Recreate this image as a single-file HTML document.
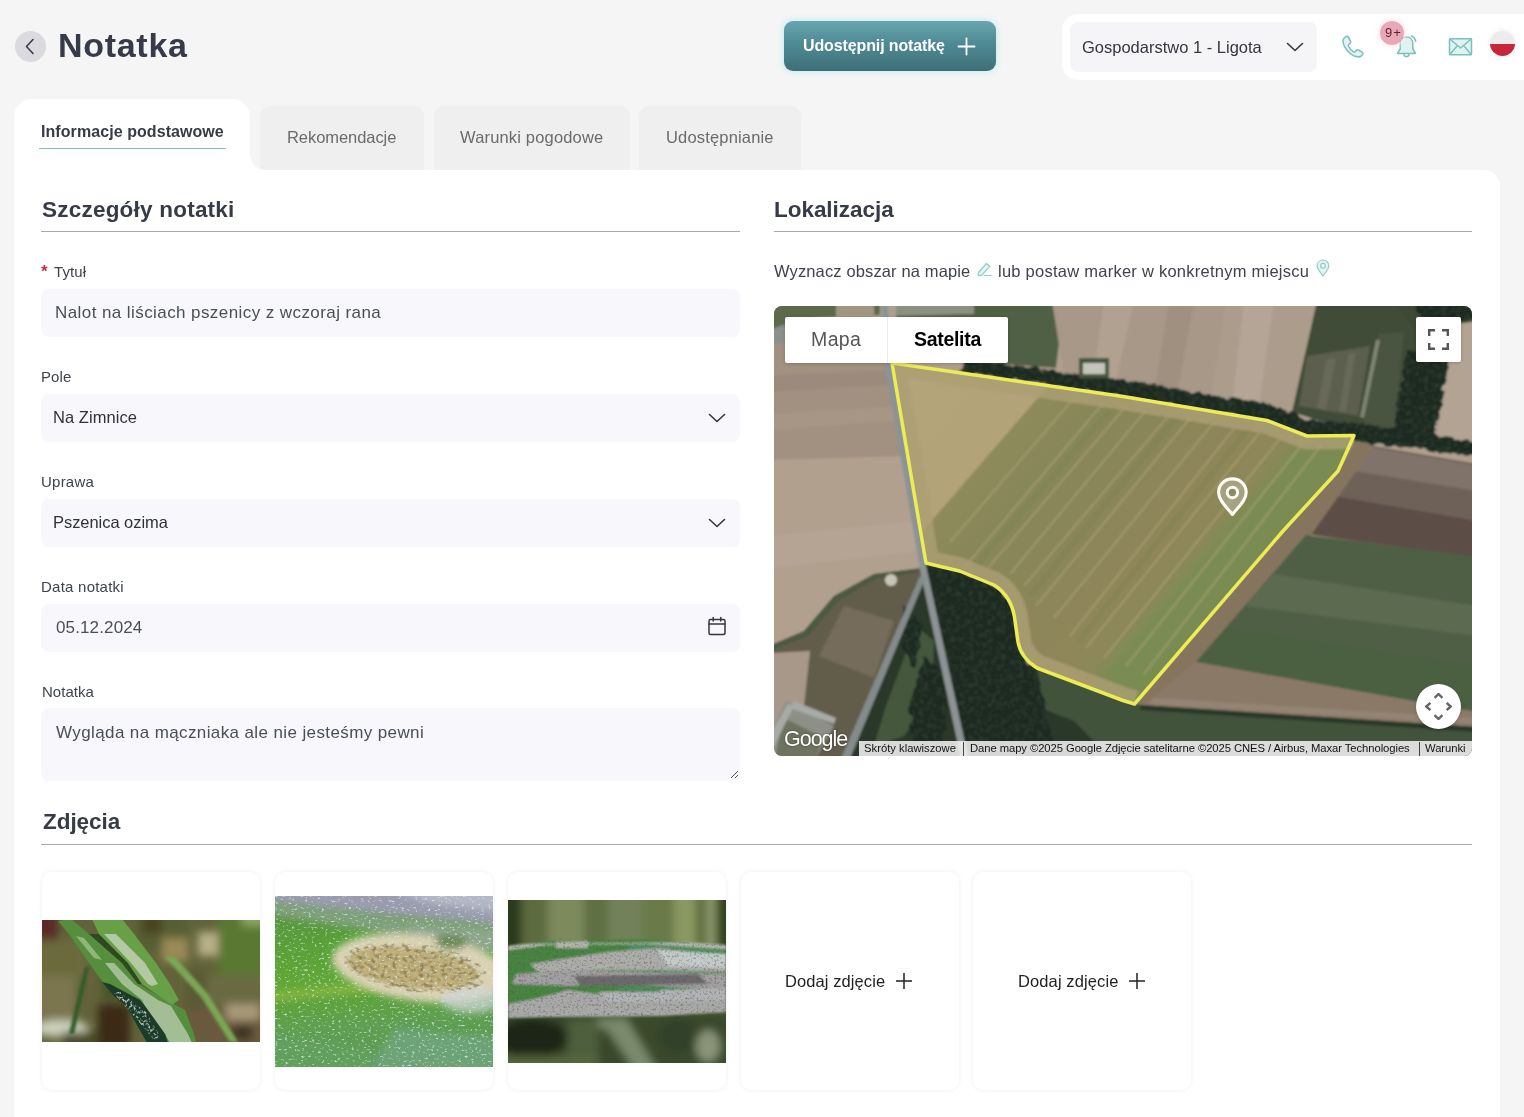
<!DOCTYPE html>
<html lang="pl">
<head>
<meta charset="utf-8">
<title>Notatka</title>
<style>
*{box-sizing:border-box;margin:0;padding:0}
html,body{width:1524px;height:1117px;overflow:hidden}
body{background:#f5f5f5;font-family:"Liberation Sans",sans-serif;color:#3a3f47;position:relative}
.abs{position:absolute}
.t{will-change:transform;position:absolute;white-space:nowrap;line-height:1}
.back{left:15px;top:31px;width:31px;height:31px;border-radius:50%;background:#dbdbdf}
.title{left:59px;top:29px;font-size:34px;font-weight:700;color:#363b47;letter-spacing:-0.2px}
.sharebtn{left:784px;top:21px;width:212px;height:50px;border-radius:9px;background:linear-gradient(180deg,#69a6b0 0%,#4f8a94 45%,#3e6f78 100%);box-shadow:0 0 6px 1px rgba(190,235,240,.9)}
.sharebtn .t{left:19px;top:17px;font-size:16px;font-weight:700;color:#fff}
.toppanel{left:1062px;top:14px;width:480px;height:66px;border-radius:16px;background:#fff}
.farm{left:1070px;top:22px;width:247px;height:50px;border-radius:8px;background:#f5f5f8}
.farm .t{left:12px;top:17px;font-size:16px;color:#33373d}
.tab{position:absolute;top:106px;height:64px;background:#efefef;border-radius:10px 10px 0 0}
.tab .t{top:24px;font-size:16px;color:#6b6b6b}
.tab.active{left:14px;top:99px;width:236px;height:75px;background:#fff;border-radius:18px 18px 0 0}
.tab.active .t{left:27px;top:24px;font-size:15.5px;font-weight:700;color:#363b47}
.tab.active i{position:absolute;left:25px;top:48.500px;width:186.500px;height:1.500px;background:#7cc3bd}
.card{left:14px;top:169.500px;width:1486px;height:960px;background:#fff;border-radius:0 16px 0 0}
.h2{font-size:22px;font-weight:700;color:#363b47}
.hr{position:absolute;height:1px;background:#a9a9a9}
.lbl{font-size:14px;color:#3f444b}
.inp{position:absolute;left:41px;width:699px;height:48px;border-radius:8px;background:#f8f8fc}
.inp .t{left:15px;top:15px;font-size:16.5px;color:#4a4f57}
.inp.sel .t{left:12px;font-size:16px;color:#2f3338}
.photo{position:absolute;top:872px;width:218px;height:218px;border-radius:10px;background:#fff;box-shadow:0 0 5px rgba(0,0,0,.07);overflow:hidden}
.photo .t{font-size:16px;color:#222}
</style>
</head>
<body>
<!-- header -->
<div class="abs back"><svg width="31" height="31" viewBox="0 0 31 31"><path d="M18 8.5 L11.5 15.5 L18 22.5" fill="none" stroke="#3a3f47" stroke-width="1.6" stroke-linecap="round" stroke-linejoin="round"/></svg></div>
<div class="t" style="left:58px;top:28.2px;font-size:34px;letter-spacing:0.7px;font-weight:700;color:#363b47">Notatka</div>
<div class="t" style="left:803.3px;top:38.0px;font-size:16px;letter-spacing:-0.12px;font-weight:700;color:#fff;z-index:2">Udostępnij notatkę</div>
<div class="abs sharebtn">
<svg class="abs" style="left:173px;top:16px" width="19" height="19" viewBox="0 0 19 19"><path d="M9.5 1.5V17.5M1.5 9.5H17.5" stroke="#fff" stroke-width="1.8" stroke-linecap="round"/></svg></div>
<div class="abs toppanel"></div>
<div class="t" style="left:1082.2px;top:38.8px;font-size:16.5px;letter-spacing:0.0px;color:#33373d;z-index:2">Gospodarstwo 1 - Ligota</div>
<div class="abs farm">
<svg class="abs" style="left:215px;top:19px" width="20" height="12" viewBox="0 0 20 12"><path d="M2.5 2.5L10 9.5L17.5 2.5" fill="none" stroke="#33373d" stroke-width="1.6" stroke-linecap="round" stroke-linejoin="round"/></svg></div>
<!-- HEADER-ICONS -->
<svg class="abs" style="left:1338px;top:32px" width="30" height="30" viewBox="0 0 30 30"><path d="M8.200 4.600C6.500 5.400 4.800 7 5 9.500C5.600 16 12.500 23.600 19.500 24.800C22 25.200 24 23.800 24.800 22C25.100 21.200 24.800 20.600 24.100 20.200L20.200 18C19.500 17.600 18.900 17.700 18.400 18.300L17.200 19.700C16.700 20.200 16.100 20.300 15.500 19.900C13.200 18.400 11.500 16.300 10.400 14C10.100 13.300 10.200 12.800 10.800 12.300L12.200 11.200C12.800 10.700 12.900 10.100 12.600 9.400L10.500 5.300C10.100 4.500 9.200 4.200 8.200 4.600Z" fill="#dff3f3" stroke="#7cbfbb" stroke-width="1.500" stroke-linejoin="round"/></svg>
<svg class="abs" style="left:1392px;top:32px" width="30" height="30" viewBox="0 0 30 30"><path d="M14.500 5C10.500 5 8.200 8 8.200 11.500V17L5.500 21.500H23.500L20.800 17V11.500C20.800 8 18.500 5 14.500 5Z" fill="#dff3f3" stroke="#7cbfbb" stroke-width="1.500" stroke-linejoin="round"/><path d="M12 22C12 23.600 13.100 24.600 14.500 24.600C15.900 24.600 17 23.600 17 22" fill="none" stroke="#7cbfbb" stroke-width="1.500"/><path d="M19.500 4C21.800 5 23.300 7 23.800 9.300" fill="none" stroke="#7cbfbb" stroke-width="1.500" stroke-linecap="round"/></svg>
<div class="abs" style="left:1380px;top:21px;width:24px;height:24px;border-radius:50%;background:rgba(232,160,178,.92);box-shadow:0 0 5px 2px rgba(255,235,240,.9)"></div>
<div class="t" style="left:1384.5px;top:26.2px;font-size:13px;letter-spacing:0.9px;color:#5b1f33">9+</div>
<svg class="abs" style="left:1446px;top:34px" width="30" height="26" viewBox="0 0 30 26"><rect x="3.500" y="4.800" width="22" height="16" rx=".8" fill="#dff3f3" stroke="#7cbfbb" stroke-width="1.500"/><path d="M3.500 4.800L14.500 14L25.500 4.800M3.500 20.800L11.500 11.500M25.500 20.800L17.500 11.500" fill="none" stroke="#7cbfbb" stroke-width="1.400" stroke-linejoin="round"/></svg>
<div class="abs" style="left:1490px;top:31px;width:25px;height:25px;border-radius:50%;overflow:hidden;background:#ececec;box-shadow:0 0 4px 1px rgba(240,240,240,.9)"><div class="abs" style="left:0;top:12.500px;width:25px;height:13px;background:#c7273d"></div></div>

<!-- tabs -->
<div class="tab active"><i></i></div>
<div class="t" style="left:40.5px;top:123.8px;font-size:16px;letter-spacing:0.07px;font-weight:700;color:#363b47;z-index:2">Informacje podstawowe</div>
<div class="tab" style="left:260px;width:164px"></div>
<div class="t" style="left:286.7px;top:129.3px;font-size:16.5px;letter-spacing:-0.06px;color:#6b6b6b;z-index:2">Rekomendacje</div>
<div class="tab" style="left:434px;width:196px"></div>
<div class="t" style="left:459.9px;top:129.3px;font-size:16.5px;letter-spacing:0.17px;color:#6b6b6b;z-index:2">Warunki pogodowe</div>
<div class="tab" style="left:639px;width:161.500px"></div>
<div class="t" style="left:665.7px;top:129.3px;font-size:16.5px;letter-spacing:0.17px;color:#6b6b6b;z-index:2">Udostępnianie</div>

<div class="abs card"></div>
<div class="abs" style="left:250px;top:155px;width:15px;height:15px;background:radial-gradient(circle at 100% 0,rgba(255,255,255,0) 14.500px,#fff 15px)"></div>

<!-- left column -->
<div class="t" style="left:42.3px;top:199.0px;font-size:22.5px;letter-spacing:0.22px;font-weight:700;color:#363b47">Szczegóły notatki</div>
<div class="hr" style="left:41px;top:231px;width:699px"></div>
<div class="t" style="left:41px;top:262.500px;font-size:17px;font-weight:700;color:#b8324c">*</div>
<div class="t" style="left:53.6px;top:263.9px;font-size:15px;letter-spacing:0.11px;color:#3f444b">Tytuł</div>
<div class="inp" style="top:289px"></div>
<div class="t" style="left:55.2px;top:304.1px;font-size:17px;letter-spacing:0.42px;color:#4a4f57">Nalot na liściach pszenicy z wczoraj rana</div>
<div class="t" style="left:40.8px;top:368.8px;font-size:15px;letter-spacing:0.07px;color:#3f444b">Pole</div>
<div class="t" style="left:52.6px;top:409.0px;font-size:16.5px;letter-spacing:0.05px;color:#2f3338;z-index:2">Na Zimnice</div>
<div class="inp sel" style="top:394px"><svg class="abs" style="left:666px;top:18px" width="20" height="12" viewBox="0 0 20 12"><path d="M2.500 2.500L10 9.500L17.500 2.500" fill="none" stroke="#33373d" stroke-width="1.600" stroke-linecap="round" stroke-linejoin="round"/></svg></div>
<div class="t" style="left:40.8px;top:473.8px;font-size:15px;letter-spacing:0.23px;color:#3f444b">Uprawa</div>
<div class="t" style="left:52.6px;top:514.0px;font-size:16.5px;letter-spacing:-0.05px;color:#2f3338;z-index:2">Pszenica ozima</div>
<div class="inp sel" style="top:499px"><svg class="abs" style="left:666px;top:18px" width="20" height="12" viewBox="0 0 20 12"><path d="M2.500 2.500L10 9.500L17.500 2.500" fill="none" stroke="#33373d" stroke-width="1.600" stroke-linecap="round" stroke-linejoin="round"/></svg></div>
<div class="t" style="left:40.8px;top:578.8px;font-size:15px;letter-spacing:0.24px;color:#3f444b">Data notatki</div>
<div class="t" style="left:55.7px;top:618.6px;font-size:17px;letter-spacing:0.13px;color:#4a4f57;z-index:2">05.12.2024</div>
<div class="inp" style="top:604px"><svg class="abs" style="left:665px;top:11px" width="22" height="22" viewBox="0 0 22 22"><rect x="3" y="4.500" width="16" height="15" rx="1.500" fill="none" stroke="#33373d" stroke-width="1.500"/><path d="M3 9H19M7.200 2.500V6M14.800 2.500V6" stroke="#33373d" stroke-width="1.500" stroke-linecap="round"/></svg></div>
<div class="t" style="left:41.5px;top:683.8px;font-size:15px;letter-spacing:0.02px;color:#3f444b">Notatka</div>
<div class="t" style="left:56.2px;top:723.6px;font-size:17px;letter-spacing:0.39px;color:#4a4f57;z-index:2">Wygląda na mączniaka ale nie jesteśmy pewni</div>
<div class="inp" style="top:708px;height:73px"><svg class="abs" style="left:688px;top:61px" width="10" height="10" viewBox="0 0 10 10"><path d="M9 2L2 9M9 6L6 9" stroke="#555" stroke-width="1"/></svg></div>

<!-- right column -->
<div class="t" style="left:773.8px;top:198.8px;font-size:22.5px;letter-spacing:-0.04px;font-weight:700;color:#363b47">Lokalizacja</div>
<div class="hr" style="left:774px;top:231px;width:698px"></div>
<div class="t" style="left:774.2px;top:262.6px;font-size:16.5px;letter-spacing:0.13px;color:#3f444b">Wyznacz obszar na mapie</div>
<div class="t" style="left:998.2px;top:262.6px;font-size:16.5px;letter-spacing:0.25px;color:#3f444b">lub postaw marker w konkretnym miejscu</div>
<svg class="abs" style="left:975px;top:260px" width="18" height="18" viewBox="0 0 18 18"><path d="M3.500 12.500L11.500 3.500L14.800 6.300L6.800 15.200L3 15.600Z" fill="#e4f4f4" stroke="#93cbc7" stroke-width="1.200" stroke-linejoin="round"/><path d="M9 15.500H16" stroke="#93cbc7" stroke-width="1.200" stroke-linecap="round"/></svg>
<svg class="abs" style="left:1314px;top:258px" width="18" height="20" viewBox="0 0 18 20"><path d="M9 2C5.600 2 3.200 4.500 3.200 7.700C3.200 11.500 7 15 9 18C11 15 14.800 11.500 14.800 7.700C14.800 4.500 12.400 2 9 2Z" fill="#e4f4f4" stroke="#93cbc7" stroke-width="1.200" stroke-linejoin="round"/><circle cx="9" cy="7.800" r="2.400" fill="#fff" stroke="#93cbc7" stroke-width="1.200"/></svg>
<!-- MAP -->
<div class="abs" id="map" style="left:774px;top:306px;width:698px;height:450px;border-radius:8px;overflow:hidden;background:#b09f8e">
<svg class="abs" style="left:0;top:0" width="698" height="450" viewBox="0 0 698 450">
<defs>
<filter id="soft" x="-5%" y="-5%" width="110%" height="110%"><feGaussianBlur stdDeviation="1.1"/></filter>
<filter id="rough" x="-5%" y="-5%" width="110%" height="110%" color-interpolation-filters="sRGB"><feTurbulence type="fractalNoise" baseFrequency="0.11" numOctaves="2" seed="5" result="t"/><feDisplacementMap in="SourceGraphic" in2="t" scale="8" xChannelSelector="R" yChannelSelector="G" result="d"/><feGaussianBlur in="d" stdDeviation="0.7"/></filter>
<filter id="mottle" x="-5%" y="-5%" width="110%" height="110%" color-interpolation-filters="sRGB"><feTurbulence type="fractalNoise" baseFrequency="0.11" numOctaves="2" seed="5" result="t"/><feDisplacementMap in="SourceGraphic" in2="t" scale="8" xChannelSelector="R" yChannelSelector="G" result="d"/><feTurbulence type="fractalNoise" baseFrequency="0.22" numOctaves="3" seed="11" result="n"/><feColorMatrix in="n" type="matrix" values="0 0 0 0 0.2  0 0 0 0 0.28  0 0 0 0 0.2  0 3 0 0 -1.450" result="c"/><feComposite in="c" in2="d" operator="in" result="m"/><feGaussianBlur in="m" stdDeviation="0.600"/></filter>
<filter id="soft2" x="-5%" y="-5%" width="110%" height="110%"><feGaussianBlur stdDeviation="2.5"/></filter>
<filter id="grain" x="0" y="0" width="100%" height="100%"><feTurbulence type="fractalNoise" baseFrequency="0.35" numOctaves="2" seed="4" result="n"/><feColorMatrix in="n" type="matrix" values="0 0 0 0 0  0 0 0 0 0  0 0 0 0 0  0.9 0.9 0 0 -0.75"/></filter>
<linearGradient id="fieldg" gradientUnits="userSpaceOnUse" x1="0" y1="0" x2="454" y2="392">
<stop offset="0" stop-color="#b6a67d"/><stop offset="0.43" stop-color="#b2a379"/><stop offset="0.436" stop-color="#8e8a5b"/><stop offset="0.52" stop-color="#88875a"/><stop offset="0.62" stop-color="#8a865a"/><stop offset="0.74" stop-color="#8f865a"/><stop offset="0.795" stop-color="#8c8858"/><stop offset="0.825" stop-color="#7b8c53"/><stop offset="1" stop-color="#778b51"/>
</linearGradient>
<clipPath id="polyclip"><path d="M118 57L349 90.5L493 114.5L533 130L580 129.5L564 165L509 225L360.5 398L349 394.5L263 362Q247 352 244 336L240.5 311Q237 290 220 279L185.5 265L160 259L152 257L146.5 225Z"/></clipPath>
</defs>
<g filter="url(#soft)">
<!-- base fields -->
<rect x="-5" y="-5" width="708" height="460" fill="#b09f8e"/>
<!-- left tan field texture bands -->
<path d="M-5 60L115 60L140 215L148 262L100 268L60 290L30 325L-5 340Z" fill="#b2a08f"/>
<path d="M-5 36L112 30L118 57L133 150L-5 154Z" fill="#a29180"/>
<path d="M-5 70L122 64L124 78L-5 86Z" fill="#97877a" opacity=".6"/>
<path d="M-5 108L128 100L130 114L-5 124Z" fill="#ab9a89" opacity=".6"/>
<path d="M-5 230L142 215L146 245L-5 262Z" fill="#b8a797" opacity=".6"/>
<!-- top strip above control -->
<path d="M-5 -5L106 -5L106 9L40 12L-5 30Z" fill="#5b6a4c"/>
<path d="M62 -5L100 -5L100 12L62 12Z" fill="#a39584"/>
<path d="M-5 24L12 18L12 36L-5 40Z" fill="#8b918a"/>
<!-- top fields right of road -->
<path d="M122 -5L290 -5L282 62L122 50Z" fill="#4f6044"/>
<path d="M122 -5L200 -5L200 8L122 10Z" fill="#8b917f"/>
<path d="M278 -5L455 -5L437 100L349 84L290 70Z" fill="#a89888"/>
<path d="M330 -5L360 -5L340 84L318 80Z" fill="#b4a595" opacity=".7"/>
<path d="M395 -5L420 -5L402 94L380 90Z" fill="#9d8d7d" opacity=".7"/>
<path d="M452 -5L545 -5L520 108L436 98Z" fill="#ab9c8c"/>
<path d="M470 -5L500 -5L485 100L458 98Z" fill="#b8aa9b" opacity=".7"/>
<!-- green/brown field top right -->
<path d="M543 -5L664 -5L650 60L634 132L580 126L518 106Z" fill="#404c39"/>
<path d="M533 50L596 40L584 110L525 100Z" fill="#5c5e4d"/>
<path d="M552 54L562 52L552 104L543 102Z" fill="#6e6d5c" opacity=".7"/>
<path d="M574 48L582 46L572 106L565 105Z" fill="#6e6d5c" opacity=".7"/>
<path d="M604 28L630 26L620 124L590 116Z" fill="#48543f"/>
<path d="M602 34L606 34L590 112L586 111Z" fill="#9a9d8c" opacity=".7"/>
<path d="M620 -5L703 -5L703 20L640 22Z" fill="#3c4a36"/>
<!-- tree cluster right -->
<path d="M668 20L703 15L703 142L660 134Z" fill="#b2a392"/>
<!-- brown fields right -->
<path d="M588 138L703 158L703 255L532 228L560 180Z" fill="#6e6259"/>
<path d="M560 190L703 215L703 252L536 228Z" fill="#5c4e46"/>
<path d="M590 140L703 160L703 185L580 165Z" fill="#80736a"/>
<!-- path band right of polygon -->
<path d="M582 132L600 140L535 232L424 358L366 402L358 398L509 225L564 165Z" fill="#85745f"/>
<!-- green field bottom right -->
<path d="M532 229L703 251L703 406L644 396L422 356Z" fill="#4f5f44"/>
<path d="M500 268L703 300L703 330L470 300Z" fill="#5e6d52" opacity=".8"/>
<path d="M452 322L703 360L703 406L644 396L422 356Z" fill="#4b6041" opacity=".8"/>
<!-- tan strip bottom -->
<path d="M422 356L644 396L703 406L703 422L366 400Z" fill="#8a7966"/>
<path d="M380 392L703 412L703 418L375 398Z" fill="#99897a" opacity=".7"/>
<!-- bottom dark strip & meadow -->
<path d="M255 355L366 399L703 421L703 455L280 455Z" fill="#42533b"/>
<path d="M262 400L300 415L340 455L270 455Z" fill="#2b3829"/>
<path d="M366 399L703 421L703 426L366 404Z" fill="#2c3929"/>
<!-- olive fields bottom-left -->
<path d="M-5 340L30 325L60 290L100 268L148 262L148 272L70 455L-5 455Z" fill="#625d4b"/>
<path d="M-5 340L30 325L60 290L100 268L148 262L148 266L102 273L64 295L34 330L-5 346Z" fill="#4b5a40"/>
<path d="M70 300L120 315L100 372L45 350Z" fill="#7b705f" opacity=".8"/>
<path d="M-5 347L36 345L30 400L10 430L-5 440Z" fill="#a8988a"/>
<path d="M12 395L60 420L40 455L-5 455L-5 430Z" fill="#8e9088"/>
<path d="M10 412L50 432L40 455L0 455Z" fill="#6d735f"/>
<!-- between roads -->
<path d="M150 268L190 455L72 455Z" fill="#2b382a"/>
<path d="M142 320L160 335L158 390L130 430L100 440L112 400Z" fill="#4a5e40" opacity=".85"/>
<!-- forest -->
<g filter="url(#rough)" fill="#1f2b23">
<path d="M152 257L185 265L220 279Q237 290 240.5 311L244 336Q247 352 263 362L282 455L192 455L150 262Z"/>
<path d="M130 300L150 320L140 360L125 340Z"/>
<path d="M150 350L175 370L170 440L140 455L135 400Z"/>
<path d="M190 52L349 74L493 98L533 113L580 117L703 136L703 151L580 135L533 133L493 115L349 91L186 66Z"/>
<path d="M634 44L676 52L658 140L618 128Z"/>
<path d="M640 -5L703 -5L703 12L650 18Z"/>
</g>
<g filter="url(#mottle)" fill="#000" opacity=".75">
<path d="M152 257L185 265L220 279Q237 290 240.5 311L244 336Q247 352 263 362L282 455L192 455L150 262Z"/>
<path d="M130 300L150 320L140 360L125 340Z"/>
<path d="M150 350L175 370L170 440L140 455L135 400Z"/>
<path d="M190 52L349 74L493 98L533 113L580 117L703 136L703 151L580 135L533 133L493 115L349 91L186 66Z"/>
<path d="M634 44L676 52L658 140L618 128Z"/>
<path d="M640 -5L703 -5L703 12L650 18Z"/>
</g>
<!-- roads -->
<path d="M107 -5L113.500 -5L117 57L146 225L152.500 262L195 455L187.500 455L146 264L139.500 226L110.500 58Z" fill="#8d9395"/>
<path d="M146 270L151.500 272L75 455L66 455Z" fill="#848b8c"/>
<path d="M20 395L62 412L60 418L16 402Z" fill="#a7aaa6"/>
<path d="M14 398L20 400L-5 450L-5 430Z" fill="#a7aaa6"/>
<circle cx="117" cy="274" r="6" fill="#c9c4b8"/>
<rect x="305" y="52" width="30" height="20" fill="#4a5540"/><rect x="309" y="57" width="22" height="11" fill="#c4c4bb"/>
</g>
<!-- field polygon -->
<g clip-path="url(#polyclip)">
<rect x="100" y="40" width="500" height="370" fill="url(#fieldg)"/>
<g stroke="#b0a47c" stroke-width="2.400" opacity=".5" fill="none" filter="url(#soft)">
<path d="M300 92L176 236M330 96L190 262M352 100L214 262M372 104L236 268M396 108L250 280M416 112L262 300M440 116L280 312M462 120L296 330M486 126L312 342M508 130L330 352M530 136L352 360M548 138L370 368"/>
</g>
<g stroke="#7b8050" stroke-width="6" opacity=".3" fill="none"><path d="M341 98L200 262M404 110L256 290M474 123L304 336"/></g>
<path d="M580 129.500L533 130L493 114.500L349 90.500L118 57L146.500 225L152 257L160 259L185.500 265L220 279Q237 290 240.5 311L244 336Q247 352 263 362L349 394.500L360.500 398" fill="none" stroke="#ad9f75" stroke-width="27" stroke-linejoin="round" opacity=".8" filter="url(#soft)"/>
</g>
<path d="M118 57L349 90.5L493 114.5L533 130L580 129.5L564 165L509 225L360.5 398L349 394.5L263 362Q247 352 244 336L240.5 311Q237 290 220 279L185.5 265L160 259L152 257L146.5 225Z" fill="none" stroke="#ecec54" stroke-width="3.500" stroke-linejoin="round"/>
<!-- marker pin -->
<g transform="translate(458.400,171.200)">
<path d="M0 1.700C-8 1.700 -13.800 7.700 -13.800 15.200C-13.800 24 -4 31.500 0 37.300C4 31.500 13.800 24 13.800 15.200C13.800 7.700 8 1.700 0 1.700Z" fill="rgba(205,205,200,.38)" stroke="#fffdf2" stroke-width="3.100" stroke-linejoin="round"/>
<circle cx="0" cy="15.300" r="6.600" fill="rgba(120,118,80,.55)"/>
<circle cx="0" cy="15.300" r="5.200" fill="none" stroke="#fffdf2" stroke-width="3"/>
</g>
</svg>
<!-- map type control -->
<div class="abs" style="left:11px;top:11px;width:223px;height:45.500px;background:#fff;border-radius:2px;box-shadow:0 1px 4px -1px rgba(0,0,0,.3)">
<div class="abs" style="left:101.500px;top:0;width:1px;height:45.500px;background:#ececec"></div>
<div class="t" style="left:26px;top:13.0px;font-size:19.5px;letter-spacing:0.39px;color:#565656">Mapa</div>
<div class="t" style="left:129.2px;top:13.0px;font-size:19.5px;letter-spacing:-0.3px;font-weight:700;color:#000">Satelita</div>
</div>
<!-- fullscreen -->
<div class="abs" style="left:642px;top:11px;width:45px;height:45px;background:#fff;border-radius:2px;box-shadow:0 1px 4px -1px rgba(0,0,0,.3)">
<svg class="abs" style="left:12px;top:12px" width="21" height="21" viewBox="0 0 21 21"><path d="M1.2 7V1.2H7M14 1.2H19.800V7M19.800 14V19.800H14M7 19.800H1.200V14" fill="none" stroke="#555" stroke-width="2.400"/></svg>
</div>
<!-- pan control -->
<div class="abs" style="left:642px;top:378px;width:45px;height:45px;background:#fff;border-radius:50%;box-shadow:0 1px 4px -1px rgba(0,0,0,.3)">
<svg class="abs" style="left:9px;top:9px" width="27" height="27" viewBox="0 0 27 27"><path d="M9.600 4.900L13.500 1L17.400 4.900M9.600 22.100L13.500 26L17.400 22.100M5.400 9.800L1.300 13.500L5.400 17.200M21.600 9.800L25.700 13.500L21.600 17.200" fill="none" stroke="#666" stroke-width="2.400"/></svg>
</div>
<!-- google logo -->
<div class="t" style="left:10.4px;top:422.8px;font-size:21.5px;letter-spacing:-1.01px;color:#fff;text-shadow:0 0 2px rgba(0,0,0,.55)">Google</div>
<!-- attribution -->
<div class="abs" style="left:84.500px;top:434.500px;width:614px;height:16px;background:rgba(245,245,245,.86)"></div>
<div class="t" style="left:89.8px;top:437.1px;font-size:11.25px;letter-spacing:-0.0px;color:#111">Skróty klawiszowe</div>
<div class="abs" style="left:188.500px;top:436px;width:1px;height:14px;background:#444"></div>
<div class="t" style="left:195.8px;top:437.1px;font-size:11.25px;letter-spacing:-0.07px;color:#111">Dane mapy ©2025 Google Zdjęcie satelitarne ©2025 CNES / Airbus, Maxar Technologies</div>
<div class="abs" style="left:644.500px;top:436px;width:1px;height:14px;background:#444"></div>
<div class="t" style="left:651.3px;top:437.1px;font-size:11.25px;letter-spacing:-0.06px;color:#111">Warunki</div>
</div>

<!-- photos -->
<div class="t" style="left:42.5px;top:811.0px;font-size:22.5px;letter-spacing:-0.05px;font-weight:700;color:#363b47">Zdjęcia</div>
<div class="hr" style="left:41px;top:844px;width:1431px"></div>
<div class="photo" style="left:42px"><svg class="abs" style="left:0;top:48px" width="218" height="122" viewBox="0 0 218 122">
<defs><filter id="b1" x="-10%" y="-10%" width="120%" height="120%"><feGaussianBlur stdDeviation="4.500"/></filter><filter id="b1s" x="-10%" y="-10%" width="120%" height="120%"><feGaussianBlur stdDeviation="0.700"/></filter><filter id="b1m" x="-10%" y="-10%" width="120%" height="120%"><feGaussianBlur stdDeviation="1.800"/></filter>
<filter id="sp1" x="0" y="0" width="100%" height="100%" color-interpolation-filters="sRGB"><feTurbulence type="fractalNoise" baseFrequency="0.35" numOctaves="2" seed="2" result="n"/><feColorMatrix in="n" type="matrix" values="0 0 0 0 0.86  0 0 0 0 0.9  0 0 0 0 0.86  0 4 0 0 -1.900" result="c"/><feComposite in="c" in2="SourceAlpha" operator="in"/></filter></defs>
<rect width="218" height="122" fill="#62633a"/>
<g filter="url(#b1)">
<rect x="-10" y="-10" width="26" height="30" fill="#5a2a28"/>
<rect x="-5" y="20" width="50" height="40" fill="#6b6a3c"/>
<rect x="-10" y="56" width="44" height="40" fill="#7c7650"/>
<ellipse cx="18" cy="108" rx="28" ry="9" fill="#cdd0bc"/>
<rect x="20" y="112" width="50" height="14" fill="#4a4a28"/>
<rect x="95" y="-10" width="50" height="40" fill="#565f30"/>
<rect x="120" y="18" width="26" height="24" fill="#9a8a58"/>
<rect x="100" y="-6" width="20" height="20" fill="#4a4424"/>
<rect x="156" y="12" width="24" height="24" fill="#b8b088"/>
<rect x="176" y="-10" width="50" height="70" fill="#5a7832"/>
<rect x="200" y="-8" width="24" height="14" fill="#8aa860"/>
<rect x="160" y="56" width="64" height="32" fill="#6a6a42"/>
<rect x="140" y="86" width="84" height="40" fill="#6a5a3c"/>
<rect x="184" y="84" width="34" height="16" fill="#a89a78"/>
<rect x="190" y="106" width="20" height="14" fill="#3a3020"/>
<rect x="56" y="84" width="32" height="44" fill="#3a2c18"/>
<rect x="60" y="50" width="30" height="30" fill="#4a5226"/>
<rect x="145" y="50" width="20" height="40" fill="#5a5a36"/>
</g>
<g filter="url(#b1m)">
<path d="M122 36L134 38L166 74L196 122L188 122L160 78Z" fill="#7aa855"/>
<path d="M43 47L47 47L32 114L27 114Z" fill="#2f5a25"/>
</g>
<g filter="url(#b1s)">
<path d="M16 1L29 -1L47 14L80 43L96 64L124 80L143 90L152 114L154 123L105 123L100 114L84 86L62 64L47 43L27 14Z" fill="#548f3e"/>
<path d="M47 14L57 14L86 43L100 64L96 64L80 43Z" fill="#2f4a24"/>
<path d="M63 43L72 43L92 64L116 80L129 86L146 114L150 123L128 123L123 114L103 86L100 80L80 64Z" fill="#c5d0bb" opacity=".7"/>
<path d="M34 16L42 18L60 40L52 38Z" fill="#a9c49a" opacity=".7"/>
<path d="M60 62L68 64L98 80L103 86L123 114L126 123L105 123L100 114L84 86L72 76Z" fill="#1f3a2a"/>
<path d="M50 -1L80 -1L92 14L114 43L128 64L137 80L130 85L100 64L86 43L57 14Z" fill="#68a046"/>
<path d="M62 14L74 14L103 43L116 64L110 66L106 64L89 43Z" fill="#cfd8c8" opacity=".72"/>
</g>
<path d="M70 72L78 72L104 92L118 116L112 120L92 96Z" filter="url(#sp1)" opacity=".8"/>
</svg></div>
<div class="photo" style="left:275px"><svg class="abs" style="left:0;top:24px" width="218" height="171" viewBox="0 0 218 171">
<defs><filter id="b2" x="-10%" y="-10%" width="120%" height="120%"><feGaussianBlur stdDeviation="3.500"/></filter><filter id="b2s" x="-10%" y="-10%" width="120%" height="120%"><feGaussianBlur stdDeviation="1.500"/></filter>
<filter id="sp2" x="0" y="0" width="100%" height="100%" color-interpolation-filters="sRGB"><feTurbulence type="fractalNoise" baseFrequency="0.3 0.45" numOctaves="2" seed="7" result="n"/><feColorMatrix in="n" type="matrix" values="0 0 0 0 0.84  0 0 0 0 0.92  0 0 0 0 0.9  0 0 5 0 -3"/></filter>
<filter id="sp2b" x="0" y="0" width="100%" height="100%" color-interpolation-filters="sRGB"><feTurbulence type="fractalNoise" baseFrequency="0.18 0.3" numOctaves="3" seed="21" result="n"/><feColorMatrix in="n" type="matrix" values="0 0 0 0 0.5  0 0 0 0 0.44  0 0 0 0 0.27  0 4 0 0 -1.950" result="c"/><feComposite in="c" in2="SourceAlpha" operator="in"/></filter>
<linearGradient id="g2" x1="0" y1="0" x2="0.12" y2="1"><stop offset="0" stop-color="#5a8f48"/><stop offset="0.3" stop-color="#58a038"/><stop offset="0.52" stop-color="#62a838"/><stop offset="0.58" stop-color="#7cb23e"/><stop offset="0.64" stop-color="#5ea23c"/><stop offset="0.8" stop-color="#5f9f52"/><stop offset="1" stop-color="#5c9a50"/></linearGradient></defs>
<rect width="218" height="171" fill="url(#g2)"/>
<g filter="url(#b2)">
<path d="M-10 -10L230 -10L230 30L107 18L-10 5Z" fill="#9a9cae"/>
<path d="M100 -10L230 -10L230 16L160 8Z" fill="#b4b7c6"/>
<path d="M-10 6L107 20L230 32L230 50L130 40L-10 18Z" fill="#7fa17c"/>
<path d="M130 30L230 34L230 56L150 50Z" fill="#8fa58c"/>
<path d="M120 132L230 142L230 180L90 180Z" fill="#74a585" opacity=".7"/>
<path d="M-10 140L100 150L100 180L-10 180Z" fill="#62a060" opacity=".8"/>
<ellipse cx="145" cy="72" rx="88" ry="33" fill="#d9d2b2" transform="rotate(7 145 72)"/>
<ellipse cx="196" cy="104" rx="30" ry="13" fill="#cdd4d6" opacity=".75"/>
<ellipse cx="176" cy="46" rx="16" ry="8" fill="#6f8a58"/>
</g>
<g filter="url(#b2s)">
<ellipse cx="138" cy="72" rx="66" ry="20" fill="#bfb07c" transform="rotate(7 138 72)"/>
</g>
<ellipse cx="140" cy="72" rx="72" ry="24" transform="rotate(7 140 72)" filter="url(#sp2b)" opacity=".75"/>
<rect width="218" height="171" filter="url(#sp2)" opacity=".8"/>
</svg></div>
<div class="photo" style="left:508px"><svg class="abs" style="left:0;top:28px" width="218" height="163" viewBox="0 0 218 163">
<defs><filter id="b3" x="-10%" y="-10%" width="120%" height="120%"><feGaussianBlur stdDeviation="4.500"/></filter><filter id="b3s" x="-10%" y="-10%" width="120%" height="120%"><feGaussianBlur stdDeviation="1.300"/></filter>
<filter id="sp3" x="0" y="0" width="100%" height="100%" color-interpolation-filters="sRGB"><feTurbulence type="fractalNoise" baseFrequency="0.45" numOctaves="2" seed="3" result="n"/><feColorMatrix in="n" type="matrix" values="0 0 0 0 0.32  0 0 0 0 0.3  0 0 0 0 0.34  0 3 0 0 -1.500"/></filter>
<clipPath id="leaf3"><path d="M0 46L40 41L135 39L218 45L218 112L150 116L40 117L0 118Z"/></clipPath></defs>
<rect width="218" height="163" fill="#56653c"/>
<g filter="url(#b3)">
<rect x="-10" y="-10" width="26" height="60" fill="#2c3a1c"/>
<rect x="14" y="-10" width="30" height="60" fill="#5d6c40"/>
<rect x="40" y="-10" width="36" height="60" fill="#7c8a5c"/>
<rect x="76" y="-10" width="30" height="60" fill="#5f6f42"/>
<rect x="100" y="-10" width="34" height="60" fill="#72815a"/>
<rect x="134" y="-10" width="32" height="60" fill="#6a7a4a"/>
<rect x="166" y="-10" width="24" height="60" fill="#8a9862"/>
<rect x="188" y="-10" width="12" height="60" fill="#5a6a3a"/>
<rect x="198" y="-10" width="10" height="60" fill="#8c986c"/>
<rect x="208" y="-10" width="20" height="60" fill="#33421f"/>
<rect x="-10" y="112" width="240" height="60" fill="#3b4a2a"/>
<ellipse cx="24" cy="138" rx="36" ry="20" fill="#1f2815"/>
<path d="M70 120L118 118L150 172L128 172L100 130Z" fill="#7a8a6c"/>
<rect x="60" y="120" width="30" height="50" fill="#4e5e3c"/>
<ellipse cx="170" cy="136" rx="20" ry="18" fill="#33432a"/>
<ellipse cx="200" cy="146" rx="12" ry="16" fill="#8a9478"/>
<rect x="-10" y="156" width="100" height="14" fill="#56663c"/>
</g>
<g filter="url(#b3s)">
<path d="M0 46L40 41L135 39L218 45L218 112L150 116L40 117L0 118Z" fill="#47853f"/>
<g clip-path="url(#leaf3)">
<path d="M120 44L218 46L218 118L120 118Z" fill="#5a977a" opacity=".55"/>
<path d="M0 44L218 42L218 49L140 44L40 45L0 50Z" fill="#b9bbb0"/>
<path d="M48 42L80 41L80 48L48 48Z" fill="#b4b6ac"/>
<path d="M22 64L60 58L100 52L150 48L218 56L218 72L150 70L90 70L30 72Z" fill="#adadaa"/>
<path d="M8 74L60 70L218 74L218 90L120 84L60 86L4 84Z" fill="#a2a0a0"/>
<path d="M66 76L190 74L200 84L72 86Z" fill="#6e6a6c"/>
<path d="M30 98L60 90L120 98L218 96L218 116L0 120L0 104Z" fill="#a9aaa8"/>
<path d="M90 92L218 88L218 100L100 102Z" fill="#b2b4b6"/>
<path d="M150 50L218 54L218 68L160 66Z" fill="#c4ccc8"/>
<path d="M110 86L160 86L150 92L112 92Z" fill="#4f8a5a"/>
</g>
</g>
<rect x="0" y="40" width="218" height="78" filter="url(#sp3)" clip-path="url(#leaf3)" opacity=".5"/>
</svg></div>
<div class="t" style="left:784.7px;top:972.7px;font-size:16.5px;letter-spacing:0.09px;color:#222;z-index:2">Dodaj zdjęcie</div>
<div class="photo" style="left:741px"><svg class="abs" style="left:152.500px;top:99px" width="20" height="20" viewBox="0 0 20 20"><path d="M10 2V18M2 10H18" stroke="#222" stroke-width="1.500"/></svg></div>
<div class="t" style="left:1017.6px;top:972.7px;font-size:16.5px;letter-spacing:0.11px;color:#222;z-index:2">Dodaj zdjęcie</div>
<div class="photo" style="left:973px"><svg class="abs" style="left:153.500px;top:99px" width="20" height="20" viewBox="0 0 20 20"><path d="M10 2V18M2 10H18" stroke="#222" stroke-width="1.500"/></svg></div>
</body>
</html>
